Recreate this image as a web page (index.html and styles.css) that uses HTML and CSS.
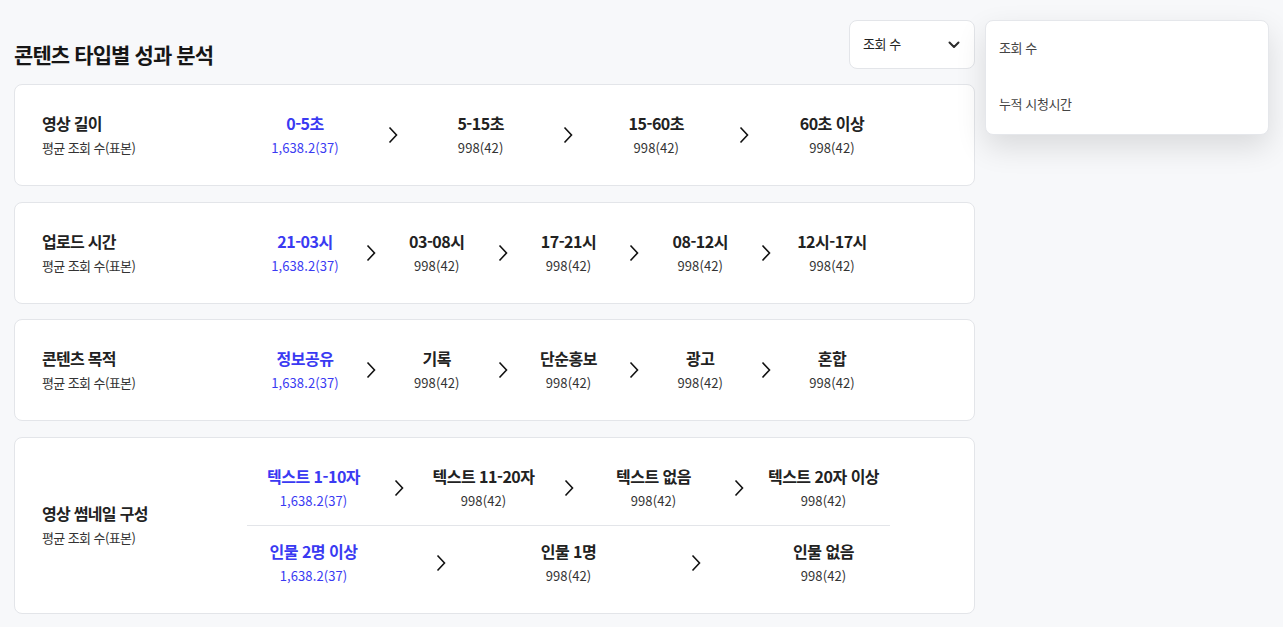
FILE: index.html
```html
<!DOCTYPE html>
<html lang="ko">
<head>
<meta charset="utf-8">
<title>콘텐츠 타입별 성과 분석</title>
<link rel="stylesheet" href="styles.css">
</head>
<body>
<div class="page">
  <main class="main">
    <header class="header">
      <h1 class="title">콘텐츠 타입별 성과 분석</h1>
      <div class="select">
        <button class="select-btn" type="button">
          <span>조회 수</span>
          <svg class="select-caret" width="12" height="8" viewBox="0 0 12 8"><path d="M1.5 1.5 L6 6 L10.5 1.5" fill="none" stroke="#2b2b2b" stroke-width="2" stroke-linecap="round" stroke-linejoin="round"/></svg>
        </button>
        <ul class="menu">
          <li class="menu-item">조회 수</li>
          <li class="menu-item">누적 시청시간</li>
        </ul>
      </div>
    </header>

    <section class="card">
      <div class="label">
        <div class="label-title">영상 길이</div>
        <div class="label-sub">평균 조회 수(표본)</div>
      </div>
      <div class="flow">
        <div class="item active"><div class="item-title">0-5초</div><div class="item-value">1,638.2(37)</div></div>
        <svg class="chev" width="10" height="18" viewBox="0 0 10 18"><path d="M1.5 1.5 L8.5 9 L1.5 16.5" fill="none" stroke="#111" stroke-width="1.6"/></svg>
        <div class="item"><div class="item-title">5-15초</div><div class="item-value">998(42)</div></div>
        <svg class="chev" width="10" height="18" viewBox="0 0 10 18"><path d="M1.5 1.5 L8.5 9 L1.5 16.5" fill="none" stroke="#111" stroke-width="1.6"/></svg>
        <div class="item"><div class="item-title">15-60초</div><div class="item-value">998(42)</div></div>
        <svg class="chev" width="10" height="18" viewBox="0 0 10 18"><path d="M1.5 1.5 L8.5 9 L1.5 16.5" fill="none" stroke="#111" stroke-width="1.6"/></svg>
        <div class="item"><div class="item-title">60초 이상</div><div class="item-value">998(42)</div></div>
      </div>
    </section>

    <section class="card">
      <div class="label">
        <div class="label-title">업로드 시간</div>
        <div class="label-sub">평균 조회 수(표본)</div>
      </div>
      <div class="flow">
        <div class="item active"><div class="item-title">21-03시</div><div class="item-value">1,638.2(37)</div></div>
        <svg class="chev" width="10" height="18" viewBox="0 0 10 18"><path d="M1.5 1.5 L8.5 9 L1.5 16.5" fill="none" stroke="#111" stroke-width="1.6"/></svg>
        <div class="item"><div class="item-title">03-08시</div><div class="item-value">998(42)</div></div>
        <svg class="chev" width="10" height="18" viewBox="0 0 10 18"><path d="M1.5 1.5 L8.5 9 L1.5 16.5" fill="none" stroke="#111" stroke-width="1.6"/></svg>
        <div class="item"><div class="item-title">17-21시</div><div class="item-value">998(42)</div></div>
        <svg class="chev" width="10" height="18" viewBox="0 0 10 18"><path d="M1.5 1.5 L8.5 9 L1.5 16.5" fill="none" stroke="#111" stroke-width="1.6"/></svg>
        <div class="item"><div class="item-title">08-12시</div><div class="item-value">998(42)</div></div>
        <svg class="chev" width="10" height="18" viewBox="0 0 10 18"><path d="M1.5 1.5 L8.5 9 L1.5 16.5" fill="none" stroke="#111" stroke-width="1.6"/></svg>
        <div class="item"><div class="item-title">12시-17시</div><div class="item-value">998(42)</div></div>
      </div>
    </section>

    <section class="card">
      <div class="label">
        <div class="label-title">콘텐츠 목적</div>
        <div class="label-sub">평균 조회 수(표본)</div>
      </div>
      <div class="flow">
        <div class="item active"><div class="item-title">정보공유</div><div class="item-value">1,638.2(37)</div></div>
        <svg class="chev" width="10" height="18" viewBox="0 0 10 18"><path d="M1.5 1.5 L8.5 9 L1.5 16.5" fill="none" stroke="#111" stroke-width="1.6"/></svg>
        <div class="item"><div class="item-title">기록</div><div class="item-value">998(42)</div></div>
        <svg class="chev" width="10" height="18" viewBox="0 0 10 18"><path d="M1.5 1.5 L8.5 9 L1.5 16.5" fill="none" stroke="#111" stroke-width="1.6"/></svg>
        <div class="item"><div class="item-title">단순홍보</div><div class="item-value">998(42)</div></div>
        <svg class="chev" width="10" height="18" viewBox="0 0 10 18"><path d="M1.5 1.5 L8.5 9 L1.5 16.5" fill="none" stroke="#111" stroke-width="1.6"/></svg>
        <div class="item"><div class="item-title">광고</div><div class="item-value">998(42)</div></div>
        <svg class="chev" width="10" height="18" viewBox="0 0 10 18"><path d="M1.5 1.5 L8.5 9 L1.5 16.5" fill="none" stroke="#111" stroke-width="1.6"/></svg>
        <div class="item"><div class="item-title">혼합</div><div class="item-value">998(42)</div></div>
      </div>
    </section>

    <section class="card">
      <div class="label">
        <div class="label-title">영상 썸네일 구성</div>
        <div class="label-sub">평균 조회 수(표본)</div>
      </div>
      <div class="rows">
        <div class="flow wide">
          <div class="item active"><div class="item-title">텍스트 1-10자</div><div class="item-value">1,638.2(37)</div></div>
          <svg class="chev" width="10" height="18" viewBox="0 0 10 18"><path d="M1.5 1.5 L8.5 9 L1.5 16.5" fill="none" stroke="#111" stroke-width="1.6"/></svg>
          <div class="item"><div class="item-title">텍스트 11-20자</div><div class="item-value">998(42)</div></div>
          <svg class="chev" width="10" height="18" viewBox="0 0 10 18"><path d="M1.5 1.5 L8.5 9 L1.5 16.5" fill="none" stroke="#111" stroke-width="1.6"/></svg>
          <div class="item"><div class="item-title">텍스트 없음</div><div class="item-value">998(42)</div></div>
          <svg class="chev" width="10" height="18" viewBox="0 0 10 18"><path d="M1.5 1.5 L8.5 9 L1.5 16.5" fill="none" stroke="#111" stroke-width="1.6"/></svg>
          <div class="item"><div class="item-title">텍스트 20자 이상</div><div class="item-value">998(42)</div></div>
        </div>
        <div class="flow wide">
          <div class="item active"><div class="item-title">인물 2명 이상</div><div class="item-value">1,638.2(37)</div></div>
          <svg class="chev" width="10" height="18" viewBox="0 0 10 18"><path d="M1.5 1.5 L8.5 9 L1.5 16.5" fill="none" stroke="#111" stroke-width="1.6"/></svg>
          <div class="item"><div class="item-title">인물 1명</div><div class="item-value">998(42)</div></div>
          <svg class="chev" width="10" height="18" viewBox="0 0 10 18"><path d="M1.5 1.5 L8.5 9 L1.5 16.5" fill="none" stroke="#111" stroke-width="1.6"/></svg>
          <div class="item"><div class="item-title">인물 없음</div><div class="item-value">998(42)</div></div>
        </div>
      </div>
    </section>
  </main>
</div>
</body>
</html>
```

FILE: styles.css
```css
* { box-sizing: border-box; }
html, body { margin: 0; padding: 0; }
body {
  background: #f7f8fa;
  font-family: "Noto Sans CJK KR", "Noto Sans", sans-serif;
  color: #222;
}
.page { padding: 20px 14px 14px; }
.main { width: 961px; }

.header {
  display: flex;
  justify-content: space-between;
  align-items: flex-end;
  height: 49px;
  margin-bottom: 15px;
}
.title {
  margin: 0;
  font-size: 21px;
  font-weight: 700;
  line-height: 30px;
  letter-spacing: -0.9px;
  color: #161616;
}
.select { position: relative; align-self: flex-start; }
.select-btn {
  display: flex;
  align-items: center;
  justify-content: space-between;
  width: 126px;
  height: 49px;
  padding: 0 14px 2px 13px;
  border: 1px solid #e3e5e9;
  border-radius: 8px;
  background: #fff;
  font-family: inherit;
  font-size: 13px;
  letter-spacing: -0.4px;
  color: #222;
}
.select-caret { display: block; margin-top: 2px; }
.menu {
  position: absolute;
  top: 0;
  left: 136px;
  width: 284px;
  margin: 0;
  padding: 0;
  list-style: none;
  background: #fff;
  border: 1px solid #e5e7eb;
  border-radius: 8px;
  box-shadow: 0 12px 30px rgba(0, 0, 0, 0.12);
}
.menu-item {
  height: 56.5px;
  display: flex;
  align-items: center;
  padding: 0 13px 4px;
  font-size: 13px;
  letter-spacing: -0.4px;
  color: #444;
}

.card {
  display: flex;
  align-items: center;
  background: #fff;
  border: 1px solid #e3e5e9;
  border-radius: 8px;
  padding: 27px 27px 28px;
  margin-bottom: 15.5px;
}
.label { width: 205px; flex-shrink: 0; }
.label-title {
  font-size: 16px;
  font-weight: 600;
  line-height: 22px;
  color: #222;
  letter-spacing: -0.7px;
}
.label-sub {
  margin-top: 5px;
  font-size: 13px;
  line-height: 18px;
  color: #333;
  letter-spacing: -0.6px;
}
.rows { width: 643px; }
.rows .flow + .flow {
  border-top: 1px solid #e3e5e9;
  margin-top: 15px;
  padding-top: 14px;
}
.flow {
  width: 643px;
  display: flex;
  align-items: center;
  justify-content: space-between;
}
.item { width: 116px; text-align: center; flex-shrink: 0; }
.flow.wide .item { width: 133px; }
.item-title {
  font-size: 16px;
  font-weight: 600;
  line-height: 22px;
  color: #222;
  letter-spacing: -0.5px;
  white-space: nowrap;
}
.item-value {
  margin-top: 5px;
  font-size: 13px;
  line-height: 18px;
  color: #333;
  letter-spacing: 0.1px;
  white-space: nowrap;
}
.item.active .item-title,
.item.active .item-value { color: #3a3af2; }
.chev { display: block; flex-shrink: 0; margin-top: 1px; }
```
